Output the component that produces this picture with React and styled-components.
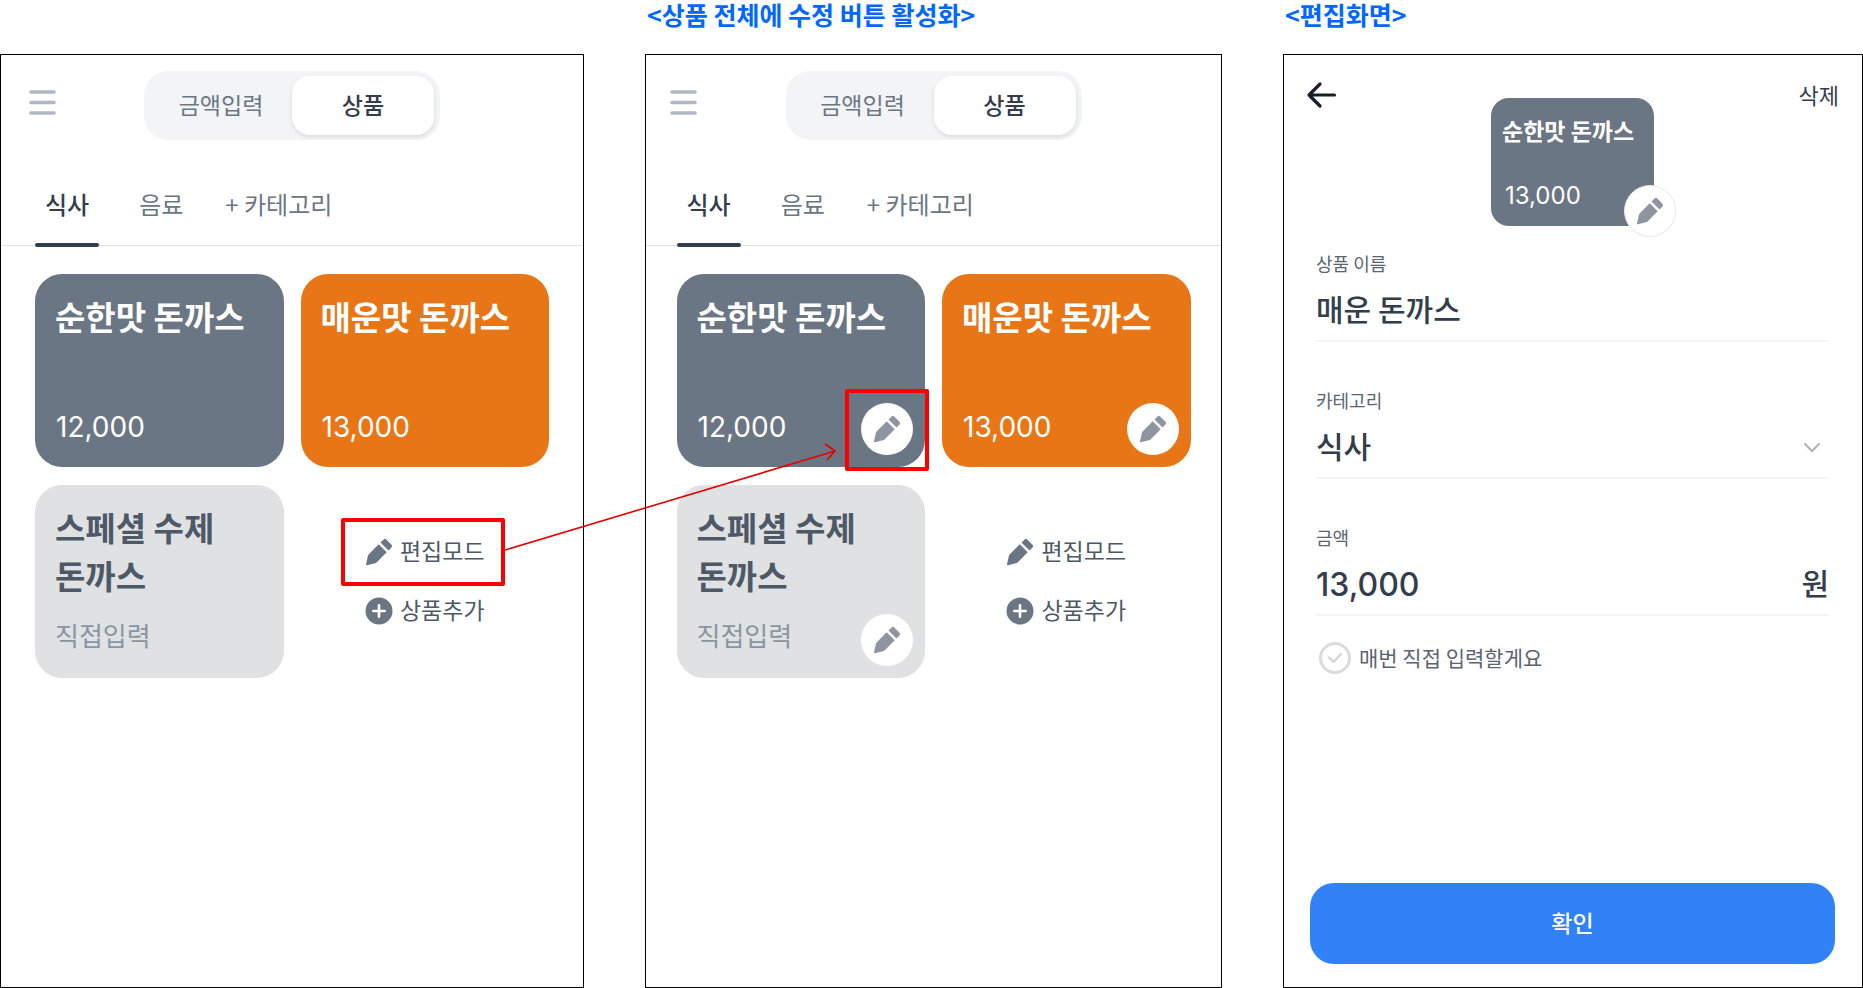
import { useState } from 'react'
import styled, { createGlobalStyle } from 'styled-components'

const korean = '"Noto Sans CJK KR", "Noto Sans", sans-serif'
const digits = 'Inter, "Noto Sans CJK KR", sans-serif'

const GlobalStyle = createGlobalStyle`
  *, *::before, *::after {
    box-sizing: border-box;
  }

  body {
    margin: 0;
    background: #fff;
    color: #333d4b;
    font-family: ${korean};
  }

  button, input, select {
    margin: 0;
    padding: 0;
    border: 0;
    background: none;
    color: inherit;
    font-family: inherit;
  }

  button {
    cursor: pointer;
  }
`

const Board = styled.main`
  display: grid;
  grid-template-columns: 584fr 577fr 580fr;
  column-gap: 61px;
  min-height: 100vh;
`

const Column = styled.section`
  display: flex;
  flex-direction: column;
  min-width: 0;
`

const Caption = styled.h2`
  height: 54px;
  margin: 0;
  padding-left: 2px;
  color: #0068ff;
  font-size: 25px;
  font-weight: 700;
  line-height: 28px;
  white-space: nowrap;
`

const Screen = styled.div`
  display: flex;
  flex: 1;
  flex-direction: column;
  border: 1px solid #000;
`

/* product list */

const ListHeader = styled.header`
  display: grid;
  grid-template-columns: 1fr auto 1fr;
  align-items: center;
  width: 100%;
  max-width: 527px;
  margin: 16px auto 40px;
`

const MenuButton = styled.button`
  display: flex;
  justify-self: start;
  padding-bottom: 6px;
`

const Segment = styled.div`
  display: flex;
  padding: 5px 6px;
  border-radius: 24px;
  background: #f2f4f6;
`

const SegmentButton = styled.button`
  width: 142px;
  height: 59px;
  padding-bottom: 4px;
  border-radius: 18px;
  background: ${props => props.$active ? '#fff' : 'transparent'};
  box-shadow: ${props => props.$active ? '0 2px 4px rgba(0, 0, 0, 0.1)' : 'none'};
  color: ${props => props.$active ? '#333d4b' : '#6b7684'};
  font-size: 23px;
  font-weight: ${props => props.$active ? 500 : 400};
`

const Tabs = styled.nav`
  border-bottom: 1px solid #dfe1e3;
`

const TabsInner = styled.div`
  display: flex;
  gap: 30px;
  max-width: 514px;
  margin: 0 auto;
`

const Tab = styled.button`
  position: relative;
  height: 65px;
  padding: 0 10px 19px;
  color: ${props => props.$active ? '#333d4b' : '#6b7684'};
  font-size: 24px;
  font-weight: ${props => props.$active ? 500 : 400};

  &::after {
    content: '';
    display: ${props => props.$active ? 'block' : 'none'};
    position: absolute;
    right: 0;
    bottom: -2px;
    left: 0;
    height: 4px;
    border-radius: 2px;
    background: #333d4b;
  }
`

const AddCategory = styled(Tab)`
  padding: 0 2px 19px;
`

const Products = styled.div`
  display: grid;
  grid-template-columns: 1fr 1fr;
  gap: 18px 17px;
  width: 100%;
  max-width: 514px;
  margin: 28px auto 0;
`

const Card = styled.article`
  display: flex;
  flex-direction: column;
  justify-content: space-between;
  position: relative;
  min-height: 193px;
  padding: 18px 20px 20px;
  border-radius: 27px;
  background: ${props => props.$color};
  color: ${props => props.$soft ? '#4e5968' : '#fff'};
`

const CardName = styled.h3`
  margin: 0;
  font-size: 33px;
  font-weight: 700;
  line-height: 48px;
  word-break: keep-all;
`

const Price = styled.p`
  margin: 0;
  padding-left: 1px;
  font-family: ${digits};
  font-size: 28px;
  line-height: 40px;
`

const PriceNote = styled.p`
  margin: 0;
  padding-bottom: 3px;
  color: #8b95a1;
  font-size: 26px;
  line-height: 40px;
`

const EditBadge = styled.button`
  display: flex;
  align-items: center;
  justify-content: center;
  position: absolute;
  right: 12px;
  bottom: 12px;
  width: 52px;
  height: 52px;
  border-radius: 50%;
  background: #fff;
  color: #8f94a1;
`

const Actions = styled.div`
  display: flex;
  flex-direction: column;
  align-items: center;
  justify-content: center;
  gap: 27px;
`

const Action = styled.button`
  display: flex;
  align-items: center;
  gap: 7px;
  position: relative;
  height: 32px;
  color: #4e5968;

  & > svg {
    color: #6b7684;
  }
`

const ActionText = styled.span`
  padding-bottom: 4px;
  font-size: 23px;
  line-height: 32px;
`

/* red marks laid over the screens */

const Mark = styled.span`
  position: absolute;
  z-index: 2;
  inset: ${props => props.$inset};
  border: 4px solid #f00;
  border-radius: 2px;
  pointer-events: none;
`

const Arrow = styled.svg`
  position: absolute;
  z-index: 2;
  top: -94px;
  left: calc(100% + 20px);
  pointer-events: none;
`

/* edit form */

const FormHeader = styled.header`
  display: flex;
  align-items: flex-start;
  justify-content: space-between;
  padding: 24px 23px 0 22px;
`

const BackButton = styled.button`
  display: flex;
  flex: 1;
  padding-top: 2px;
`

const DeleteButton = styled.button`
  flex: 1;
  font-size: 22px;
  line-height: 30px;
  text-align: right;
`

const Preview = styled.div`
  display: flex;
  flex-direction: column;
  justify-content: space-between;
  position: relative;
  width: 163px;
  height: 128px;
  margin-top: 19px;
  padding: 15px 10px 13px 11px;
  border-radius: 18px;
  background: #6b7684;
  color: #fff;
`

const PreviewName = styled.strong`
  font-size: 23px;
  font-weight: 700;
  line-height: 34px;
  white-space: nowrap;
`

const PreviewPrice = styled.span`
  padding-left: 3px;
  font-family: ${digits};
  font-size: 24px;
  line-height: 34px;
`

const PreviewBadge = styled(EditBadge)`
  right: -22px;
  bottom: -11px;
  border: 1px solid #e5e8eb;
`

const Form = styled.form`
  display: flex;
  flex: 1;
  flex-direction: column;
  padding: 22px 27px 23px 26px;
`

const Fields = styled.div`
  display: flex;
  flex-direction: column;
  gap: 43px;
  margin: 0 6px 26px;
`

const Field = styled.div`
  display: flex;
  flex-direction: column;
`

const Label = styled.label`
  color: #5a6472;
  font-size: 18px;
  line-height: 30px;
`

const Control = styled.div`
  display: flex;
  align-items: center;
  position: relative;
  height: 64px;
  padding-bottom: 2px;
  border-bottom: 2px solid #f2f4f6;
  color: #333d4b;
  font-size: 30px;
  font-weight: 500;
`

const TextInput = styled.input`
  flex: 1;
  min-width: 0;
  font-size: 30px;
  font-weight: 500;
  outline: none;
`

const AmountInput = styled(TextInput)`
  padding-top: 4px;
  font-family: ${digits};
  font-size: 32px;
`

const Select = styled.select`
  flex: 1;
  appearance: none;
  font-size: 30px;
  font-weight: 500;
  outline: none;
`

const Chevron = styled.svg`
  position: absolute;
  top: 27px;
  right: 8px;
  pointer-events: none;
`

const CheckLabel = styled.label`
  display: flex;
  align-items: center;
  gap: 8px;
  position: relative;
  margin: 0 9px;
  color: #5a6472;
  font-size: 21px;
  line-height: 30px;
`

const CheckText = styled.span`
  padding-bottom: 2px;
`

const Checkbox = styled.input`
  appearance: none;
  width: 32px;
  height: 32px;
  border: 3px solid #d9dcdf;
  border-radius: 50%;
`

const CheckMark = styled.svg`
  position: absolute;
  left: 8px;
  pointer-events: none;
`

const SubmitButton = styled.button`
  height: 81px;
  margin-top: auto;
  padding-bottom: 4px;
  border-radius: 24px;
  background: #3182f6;
  color: #fff;
  font-size: 23px;
  font-weight: 500;
`

const PencilIcon = () => (
  <svg width="28" height="28" viewBox="0 0 28 28" fill="currentColor" aria-hidden="true">
    <path d="M13.7 6.3 21.7 14.3 11.8 24.2 Q11 25 9.9 25.3 L2 27.2 Q.8 27.4 1 26.2 L2.8 18.2 Q3 17.1 3.8 16.2 Z" />
    <path d="M15.5 4.5 18.6 1.4 Q19.9 .2 21.2 1.4 L26.5 6.7 Q27.8 8 26.5 9.4 L23.5 12.5 Z" />
  </svg>
)

const PlusIcon = () => (
  <svg width="28" height="28" viewBox="0 0 28 28" aria-hidden="true">
    <circle cx="14" cy="14" r="13.5" fill="currentColor" />
    <path d="M14 8.3v11.4M8.3 14h11.4" stroke="#fff" strokeWidth="2.6" strokeLinecap="round" />
  </svg>
)

const products = [
  { name: '순한맛 돈까스', price: '12,000', color: '#6b7684' },
  { name: '매운맛 돈까스', price: '13,000', color: '#e87616' },
  { name: '스페셜 수제 돈까스', color: '#dfe1e3' },
]

const ProductList = ({ editing, markEditMode, markFirstBadge }) => {
  const [mode, setMode] = useState('상품')
  const [category, setCategory] = useState('식사')

  return (
    <Screen>
      <ListHeader>
        <MenuButton type="button" aria-label="메뉴">
          <svg width="27" height="25" viewBox="0 0 27 25" aria-hidden="true">
            <path d="M2 2h23M2 12.5h23M2 23h23" stroke="#b0b8c1" strokeWidth="3.6" strokeLinecap="round" />
          </svg>
        </MenuButton>
        <Segment>
          {['금액입력', '상품'].map(item => (
            <SegmentButton key={item} type="button" $active={mode === item} onClick={() => setMode(item)}>
              {item}
            </SegmentButton>
          ))}
        </Segment>
      </ListHeader>

      <Tabs>
        <TabsInner>
          {['식사', '음료'].map(item => (
            <Tab key={item} type="button" $active={category === item} onClick={() => setCategory(item)}>
              {item}
            </Tab>
          ))}
          <AddCategory type="button">+ 카테고리</AddCategory>
        </TabsInner>
      </Tabs>

      <Products>
        {products.map((product, index) => (
          <Card key={product.name} $color={product.color} $soft={!product.price}>
            <CardName>{product.name}</CardName>
            {product.price ? <Price>{product.price}</Price> : <PriceNote>직접입력</PriceNote>}
            {editing && (
              <EditBadge type="button" aria-label={`${product.name} 수정`}>
                <PencilIcon />
                {markFirstBadge && index === 0 && <Mark $inset="-14px -16px -16px" />}
              </EditBadge>
            )}
          </Card>
        ))}
        <Actions>
          <Action type="button">
            <PencilIcon />
            <ActionText>편집모드</ActionText>
            {markEditMode && (
              <>
                <Mark $inset="-18px -20px -18px -24px" />
                <Arrow width="332" height="110" viewBox="0 0 332 110" fill="none" stroke="#e60000" strokeWidth="1.6" aria-hidden="true">
                  <path d="M0 108 330 9M320 2 330 9 322 18" />
                </Arrow>
              </>
            )}
          </Action>
          <Action type="button">
            <PlusIcon />
            <ActionText>상품추가</ActionText>
          </Action>
        </Actions>
      </Products>
    </Screen>
  )
}

const EditScreen = () => {
  const [name, setName] = useState('매운 돈까스')
  const [amount, setAmount] = useState('13,000')

  return (
    <Screen>
      <FormHeader>
        <BackButton type="button" aria-label="뒤로">
          <svg width="32" height="28" viewBox="0 0 32 28" fill="none" stroke="#191f28" strokeWidth="3.2" strokeLinecap="round" strokeLinejoin="round" aria-hidden="true">
            <path d="M28.5 14H3M14 3 3 14 14 25" />
          </svg>
        </BackButton>
        <Preview>
          <PreviewName>순한맛 돈까스</PreviewName>
          <PreviewPrice>13,000</PreviewPrice>
          <PreviewBadge type="button" aria-label="색상 수정">
            <PencilIcon />
          </PreviewBadge>
        </Preview>
        <DeleteButton type="button">삭제</DeleteButton>
      </FormHeader>

      <Form onSubmit={event => event.preventDefault()}>
        <Fields>
          <Field>
            <Label htmlFor="name">상품 이름</Label>
            <Control>
              <TextInput id="name" value={name} onChange={event => setName(event.target.value)} />
            </Control>
          </Field>
          <Field>
            <Label htmlFor="category">카테고리</Label>
            <Control>
              <Select id="category" defaultValue="식사">
                <option>식사</option>
                <option>음료</option>
              </Select>
              <Chevron width="18" height="12" viewBox="0 0 18 12" fill="none" stroke="#b0b8c1" strokeWidth="2.4" strokeLinecap="round" aria-hidden="true">
                <path d="M2 2l7 7 7-7" />
              </Chevron>
            </Control>
          </Field>
          <Field>
            <Label htmlFor="amount">금액</Label>
            <Control>
              <AmountInput id="amount" value={amount} onChange={event => setAmount(event.target.value)} />
              원
            </Control>
          </Field>
        </Fields>
        <CheckLabel>
          <Checkbox type="checkbox" />
          <CheckMark width="16" height="12" viewBox="0 0 16 12" fill="none" stroke="#d1d6db" strokeWidth="2.4" strokeLinecap="round" strokeLinejoin="round" aria-hidden="true">
            <path d="M2 5.5 6.5 10 14 2" />
          </CheckMark>
          <CheckText>매번 직접 입력할게요</CheckText>
        </CheckLabel>
        <SubmitButton type="submit">확인</SubmitButton>
      </Form>
    </Screen>
  )
}

const App = () => {
  return (
    <>
      <GlobalStyle />
      <Board>
        <Column>
          <Caption />
          <ProductList markEditMode />
        </Column>
        <Column>
          <Caption>{'<상품 전체에 수정 버튼 활성화>'}</Caption>
          <ProductList editing markFirstBadge />
        </Column>
        <Column>
          <Caption>{'<편집화면>'}</Caption>
          <EditScreen />
        </Column>
      </Board>
    </>
  )
}

export default App
